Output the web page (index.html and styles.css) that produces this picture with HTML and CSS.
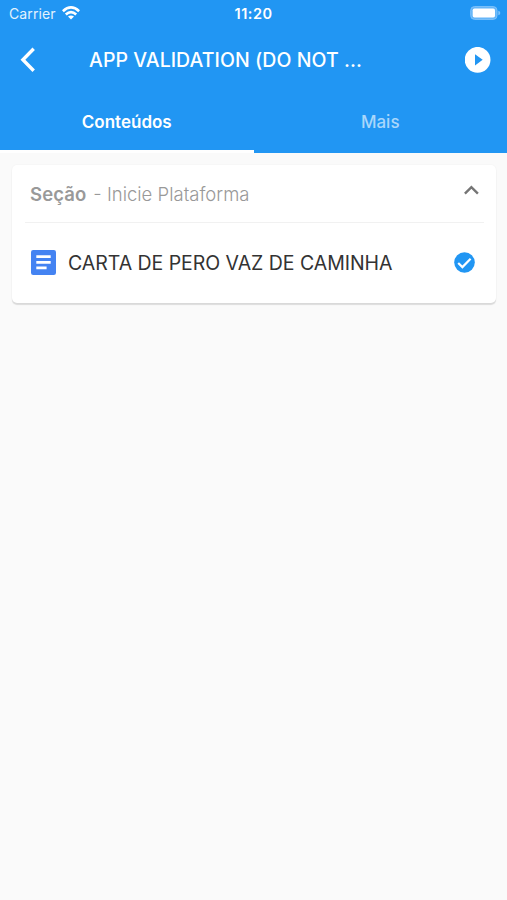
FILE: index.html
```html
<!DOCTYPE html>
<html lang="pt-BR">
<head>
<meta charset="utf-8">
<title>App Validation</title>
<link rel="stylesheet" href="styles.css">
</head>
<body>
<header class="top">
  <div class="status">
    <div class="carrier"><span class="carrier-name">Carrier</span>
      <svg class="wifi" viewBox="0 0 18 14" width="18" height="14" fill="none" stroke="#fff" stroke-width="2.6"><path d="M.9 5.2Q9-2.3 17.1 5.2M3.8 8.5Q9 3.7 14.2 8.5"/><path d="M9 13.6 6 10.6Q9 8.2 12 10.6Z" fill="#fff" stroke="none"/></svg>
    </div>
    <span class="clock">11:20</span>
    <svg class="battery" viewBox="0 0 31 14" width="31" height="14"><rect x=".7" y=".6" width="26.3" height="12.8" rx="3.8" fill="#64b5f8" stroke="#7fc2fa"/><rect x="2.7" y="2.5" width="22.3" height="9" rx="1.8" fill="#fff"/><path d="M28.3 4.8q2 .5 2 2.2t-2 2.2z" fill="#7fc2fa"/></svg>
  </div>
  <div class="bar">
    <svg class="back" viewBox="0 0 16 26" width="16" height="26" fill="none" stroke="#fff" stroke-width="3.4"><path d="M13.7 1.8 2.9 12.8l10.8 11"/></svg>
    <h1 class="title">APP VALIDATION (DO NOT ...</h1>
    <svg class="play" viewBox="0 0 26 26" width="26" height="26"><circle cx="12.6" cy="12.8" r="12.9" fill="#fff"/><path d="M10 7.2v11.2l7.7-5.6z" fill="#2196f3"/></svg>
  </div>
  <nav class="tabs">
    <div class="tab active"><span class="tab-one">Conteúdos</span></div>
    <div class="tab"><span class="tab-two">Mais</span></div>
  </nav>
</header>
<main class="card">
  <div class="section">
    <div class="section-name"><b class="section-label">Seção</b><span class="section-text">- Inicie Plataforma</span></div>
    <svg class="chevron" viewBox="0 0 16 10" width="16" height="10" fill="none" stroke="#757575" stroke-width="2.4"><path d="m1.9 8.6 6.5-6.5 6.5 6.5"/></svg>
  </div>
  <div class="item">
    <svg class="doc" viewBox="0 0 25 25" width="25" height="25"><rect width="25" height="25" rx="2.2" fill="#4483f2"/><path d="M5.3 6.6h14.4M5.3 12.3h14.4M5.3 17.9h10.3" stroke="#fff" stroke-width="2.7"/></svg>
    <span class="item-name">CARTA DE PERO VAZ DE CAMINHA</span>
    <svg class="check" viewBox="0 0 21 21" width="21" height="21"><circle cx="10.5" cy="10.5" r="10.3" fill="#2196f3"/><path d="m4.2 11 4.2 4.1 8.2-8.4" fill="none" stroke="#fff" stroke-width="2.2"/></svg>
  </div>
</main>
</body>
</html>
```
FILE: styles.css
```css
* { box-sizing: border-box; }
body {
  margin: 0;
  min-height: 900px;
  background: #fafafa;
  font-family: Inter, "Liberation Sans", sans-serif;
}
svg { display: block; flex: none; }
.top {
  height: 153px;
  background: #2196f3;
  color: #fff;
  display: flex;
  flex-direction: column;
}
.status {
  height: 28px;
  padding: 0 6px 2px 9px;
  display: grid;
  grid-template-columns: 1fr auto 1fr;
  align-items: center;
  white-space: nowrap;
}
.carrier { display: flex; align-items: center; gap: 6px; }
.carrier-name { font-size: 14px; letter-spacing: .1px; color: #e3f2fd; }
.wifi { margin-top: -1px; }
.clock { font-size: 14.5px; font-weight: 600; letter-spacing: .5px; margin-right: 3px; }
.battery { justify-self: end; }
.bar {
  height: 64px;
  padding: 0 16px 0 20px;
  display: flex;
  align-items: center;
}
.title {
  margin: 0 auto 0 53px;
  font-size: 19.5px;
  font-weight: 500;
  letter-spacing: .06px;
  white-space: nowrap;
}
.tabs { flex: 1; display: grid; grid-template-columns: 1fr 1fr; }
.tab {
  display: flex;
  justify-content: center;
  padding-top: 19px;
  font-size: 17px;
  line-height: 22px;
  font-weight: 500;
  color: #a9d7fb;
}
.active { color: #fff; font-weight: 600; border-bottom: 3px solid #fff; }
.card {
  margin: 12px 11px 0 12px;
  height: 138px;
  background: #fff;
  border-radius: 5px;
  box-shadow: 0 2px 1px rgba(0,0,0,.12), 0 0 2px rgba(0,0,0,.05);
}
.section {
  height: 58px;
  margin: 0 12px 0 13px;
  padding: 0 5px 0 5px;
  border-bottom: 1px solid #f1f1f1;
  display: flex;
  justify-content: space-between;
  align-items: center;
}
.section-name { display: flex; gap: 7px; font-size: 18.5px; white-space: nowrap; }
.section-label { font-weight: 600; color: #999; letter-spacing: .1px; }
.section-text { font-weight: 300; color: #999; }
.chevron { margin-top: -8px; }
.item {
  height: 79px;
  padding: 0 21px 0 19px;
  display: flex;
  align-items: center;
}
.item-name {
  margin: 0 auto 0 12px;
  font-size: 19.5px;
  letter-spacing: -.04px;
  color: #333;
  white-space: nowrap;
}
```
